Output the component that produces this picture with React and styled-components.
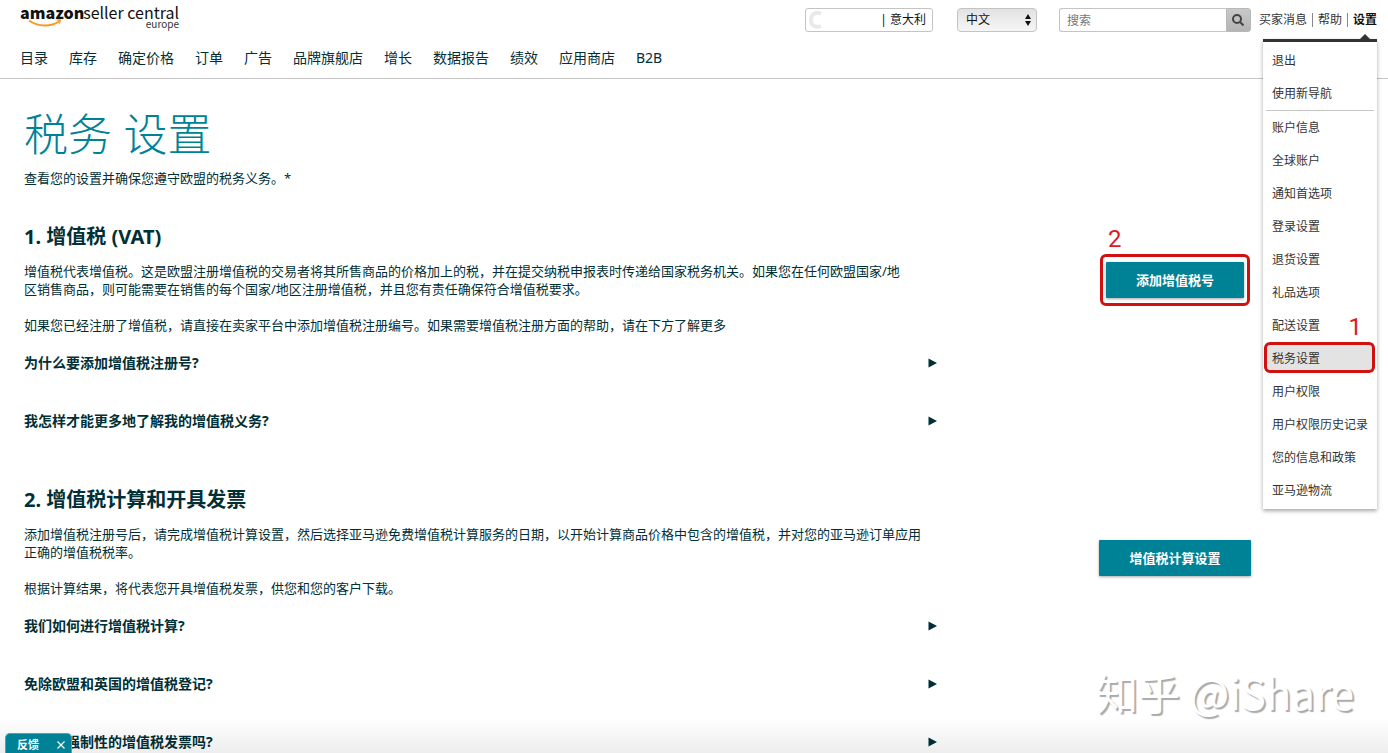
import React from 'react';
import styled, { createGlobalStyle, css } from 'styled-components';

const GlobalStyle = createGlobalStyle`
  * {
    box-sizing: border-box;
  }
  body {
    margin: 0;
    background: #fff;
    color: #002f36;
    font-family: 'Noto Sans', 'Noto Sans CJK SC', sans-serif;
    font-size: 13px;
    line-height: 18px;
  }
  a {
    color: inherit;
    text-decoration: none;
  }
  button,
  input,
  select {
    font-family: inherit;
    line-height: 18px;
  }
`;

const Page = styled.div`
  position: relative;
  height: 100vh;
  overflow: hidden;
`;

const Header = styled.header`
  border-bottom: 1px solid #c4c4c4;
`;

const TopRow = styled.div`
  display: flex;
  justify-content: space-between;
  align-items: flex-start;
  height: 40px;
  padding: 0 11px 0 20px;
`;

const Logo = styled.a`
  color: #111;
`;

const Tools = styled.div`
  display: flex;
  align-items: center;
  height: 24px;
  margin-top: 8px;
  font-size: 12px;
`;

const Marketplace = styled.button`
  display: flex;
  align-items: center;
  justify-content: space-between;
  width: 128px;
  height: 24px;
  margin-right: 24px;
  padding: 0 6px 0 2px;
  border: 1px solid #c4c4c4;
  border-radius: 3px;
  background: #fff;
  color: #111;
  font-size: 12px;
`;

const LanguageBox = styled.div`
  display: flex;
  position: relative;
  margin-right: 22px;
  svg {
    position: absolute;
    top: 6px;
    right: 5px;
    pointer-events: none;
  }
`;

const LanguageSelect = styled.select`
  width: 80px;
  height: 24px;
  padding: 0 8px;
  appearance: none;
  border: 1px solid #c4c4c4;
  border-radius: 4px;
  background: linear-gradient(#e2e2e2, #f6f6f6);
  color: #111;
  font-size: 12px;
`;

const Search = styled.form`
  display: flex;
  margin-right: 8px;
`;

const SearchInput = styled.input`
  width: 167px;
  height: 24px;
  padding: 0 7px;
  border: 1px solid #c4c4c4;
  border-right: 0;
  border-radius: 3px 0 0 3px;
  font-size: 12px;
  &::placeholder {
    color: #777;
  }
`;

const SearchButton = styled.button`
  display: flex;
  align-items: center;
  justify-content: center;
  width: 25px;
  height: 24px;
  padding: 0;
  border: 1px solid #b8b8b8;
  border-radius: 0 3px 3px 0;
  background: linear-gradient(#c9c9c9, #b4b4b4);
`;

const ToolLink = styled.a`
  color: ${({ $active }) => ($active ? '#111' : '#333')};
  font-weight: ${({ $active }) => ($active ? 'bold' : 'normal')};
`;

const Separator = styled.span`
  width: 1px;
  height: 14px;
  margin: 0 5px;
  background: #888;
`;

const SettingsAnchor = styled.div`
  position: relative;
`;

const Menu = styled.ul`
  position: absolute;
  z-index: 2;
  top: 28px;
  right: 0;
  width: 114px;
  margin: 0;
  padding: 2px 0;
  border-top: 3px solid #333;
  background: #fff;
  box-shadow: 0 2px 4px rgba(0, 0, 0, 0.35);
  list-style: none;
  &::before {
    content: '';
    position: absolute;
    top: -8px;
    right: 6px;
    border: 6px solid transparent;
    border-top: 0;
    border-bottom-color: #333;
  }
`;

const MenuItem = styled.li`
  position: relative;
  margin: 0 3px;
  ${({ $divided }) => $divided && css`
    border-bottom: 1px solid #c4c4c4;
  `}
`;

const MenuLink = styled.a`
  display: block;
  padding: 0 6px;
  background: ${({ $current }) => ($current ? 'linear-gradient(#e3e3e3, #e3e3e3) 0 1px / 100% 29px no-repeat' : 'none')};
  color: #333;
  line-height: 33px;
  white-space: nowrap;
`;

const Mark = styled.span`
  display: flex;
  position: absolute;
  inset: ${({ $inset }) => $inset};
  justify-content: ${({ $align }) => $align};
  border: 3px solid #d0110f;
  border-radius: 6px;
  pointer-events: none;
`;

const MarkNumber = styled.span`
  position: absolute;
  bottom: 100%;
  padding: 0 10px 4px 5px;
  color: #d8201f;
  font-family: Roboto, sans-serif;
  font-size: 24px;
  line-height: 28px;
`;

const Nav = styled.nav`
  display: flex;
  gap: 21px;
  height: 38px;
  padding: 0 20px;
  font-size: 14px;
  line-height: 36px;
`;

const Main = styled.main`
  padding: 25px 137px 0 24px;
`;

const Title = styled.h1`
  margin: 0 0 5px;
  color: #008296;
  font-size: 44px;
  font-weight: 300;
  line-height: 60px;
`;

const Section = styled.section`
  display: grid;
  grid-template-columns: minmax(0, 1fr) 152px;
  column-gap: 160px;
  margin-top: 35px;
`;

const SectionTitle = styled.h2`
  margin: 0 0 10px;
  font-size: 20px;
  line-height: 30px;
`;

const Text = styled.p`
  margin: 0;
  padding-right: 12px;
  & + & {
    margin-top: 18px;
  }
`;

const Question = styled.button`
  display: flex;
  align-items: center;
  justify-content: space-between;
  width: 100%;
  height: 58px;
  padding: 0 2px 0 0;
  border: 0;
  background: none;
  color: inherit;
  font-size: 14px;
  font-weight: bold;
`;

const Action = styled.div`
  position: relative;
  justify-self: center;
  align-self: start;
  margin-top: ${({ $top }) => $top};
`;

const ActionButton = styled.button`
  height: 36px;
  padding: 0 30px;
  border: 0;
  border-radius: 1px;
  background: #008296;
  box-shadow: 0 1px 3px rgba(0, 0, 0, 0.35);
  color: #fff;
  font-size: 13px;
  font-weight: bold;
  white-space: nowrap;
`;

const BottomFade = styled.div`
  position: absolute;
  right: 0;
  bottom: 0;
  left: 0;
  height: 36px;
  background: linear-gradient(rgba(0, 0, 0, 0), rgba(0, 0, 0, 0.07));
  pointer-events: none;
`;

const Feedback = styled.div`
  display: flex;
  position: absolute;
  bottom: 0;
  left: 5px;
  align-items: center;
  justify-content: space-between;
  width: 67px;
  height: 20px;
  padding: 2px 6px 0 11px;
  border: 1px solid #4ba5b2;
  border-bottom: 0;
  border-radius: 5px 5px 0 0;
  background: #008296;
`;

const FeedbackButton = styled.button`
  display: flex;
  padding: 0;
  border: 0;
  background: none;
  color: #fff;
  font-size: 11px;
  font-weight: bold;
`;

const Watermark = styled.div`
  position: absolute;
  right: 34px;
  bottom: 36px;
  color: #fff;
  font-family: 'Noto Sans CJK SC', sans-serif;
  font-size: 42px;
  line-height: 50px;
  text-shadow: 2px 2px 1px #aaa;
  pointer-events: none;
`;

const SellerLogo = () => (
  <svg width="162" height="36" viewBox="0 0 162 36" role="img" aria-label="amazon seller central europe">
    <g fontFamily="'Noto Sans CJK SC', sans-serif" fill="#111">
      <text x="0" y="19" fontSize="16" fontWeight="900">amazon</text>
      <text x="159" y="19" fontSize="16" textAnchor="end">seller central</text>
      <text x="159" y="28" fontSize="10" textAnchor="end" fill="#333">europe</text>
    </g>
    <path d="M9 20.5C18 27 31 27 39 21.5" fill="none" stroke="#f79b1e" strokeWidth="2" />
    <path d="M35 20C38 19 40 19 41 19.500C41 21.500 40 23.500 38.500 25C39 23 39.500 21.500 39 21C38 20.500 36.500 20.500 35 20Z" fill="#f79b1e" />
  </svg>
);

const Arrow = () => (
  <svg width="9" height="10" viewBox="0 0 9 10" aria-hidden="true">
    <path d="M0.500 0.500L9 5L0.500 9.500Z" fill="#002f36" />
  </svg>
);

const navItems = ['目录', '库存', '确定价格', '订单', '广告', '品牌旗舰店', '增长', '数据报告', '绩效', '应用商店', 'B2B'];

const menuItems = [
  { label: '退出' },
  { label: '使用新导航', divided: true },
  { label: '账户信息' },
  { label: '全球账户' },
  { label: '通知首选项' },
  { label: '登录设置' },
  { label: '退货设置' },
  { label: '礼品选项' },
  { label: '配送设置' },
  { label: '税务设置', current: true },
  { label: '用户权限' },
  { label: '用户权限历史记录' },
  { label: '您的信息和政策' },
  { label: '亚马逊物流' },
];

const SettingsMenu = () => (
  <Menu>
    {menuItems.map(({ label, divided, current }) => (
      <MenuItem key={label} $divided={divided}>
        <MenuLink href="#" $current={current}>{label}</MenuLink>
        {current && (
          <Mark $inset="0 -1px 2px -2px" $align="flex-end">
            <MarkNumber>1</MarkNumber>
          </Mark>
        )}
      </MenuItem>
    ))}
  </Menu>
);

const TopBar = () => (
  <TopRow>
    <Logo href="#"><SellerLogo /></Logo>
    <Tools>
      <Marketplace type="button">
        <svg width="16" height="20" viewBox="0 0 16 20" aria-hidden="true">
          <path d="M13 4C8 1 3 4 3 10C3 16 8 18 13 16" fill="none" stroke="#e9e9e9" strokeWidth="4" />
        </svg>
        <span>| 意大利</span>
      </Marketplace>
      <LanguageBox>
        <LanguageSelect aria-label="语言" defaultValue="zh">
          <option value="zh">中文</option>
        </LanguageSelect>
        <svg width="8" height="12" viewBox="0 0 8 12" aria-hidden="true">
          <path d="M4 0L7 5H1ZM4 12L1 7H7Z" fill="#111" />
        </svg>
      </LanguageBox>
      <Search>
        <SearchInput type="text" placeholder="搜索" aria-label="搜索" />
        <SearchButton type="button" aria-label="搜索">
          <svg width="12" height="12" viewBox="0 0 12 12" fill="none" stroke="#444" strokeWidth="2">
            <circle cx="5" cy="5" r="4" />
            <path d="M8 8L11.500 11.500" />
          </svg>
        </SearchButton>
      </Search>
      <ToolLink href="#">买家消息</ToolLink>
      <Separator />
      <ToolLink href="#">帮助</ToolLink>
      <Separator />
      <SettingsAnchor>
        <ToolLink href="#" $active>设置</ToolLink>
        <SettingsMenu />
      </SettingsAnchor>
    </Tools>
  </TopRow>
);

const Faq = ({ questions }) => questions.map((question) => (
  <Question key={question} type="button">
    <span>{question}</span>
    <Arrow />
  </Question>
));

const App = () => (
  <Page>
    <GlobalStyle />
    <Header>
      <TopBar />
      <Nav>
        {navItems.map((item) => <a key={item} href="#">{item}</a>)}
      </Nav>
    </Header>
    <Main>
      <Title>税务 设置</Title>
      <Text>查看您的设置并确保您遵守欧盟的税务义务。*</Text>
      <Section>
        <div>
          <SectionTitle>1. 增值税 (VAT)</SectionTitle>
          <Text>
            增值税代表增值税。这是欧盟注册增值税的交易者将其所售商品的价格加上的税，并在提交纳税申报表时传递给国家税务机关。如果您在任何欧盟国家/地
            <br />
            区销售商品，则可能需要在销售的每个国家/地区注册增值税，并且您有责任确保符合增值税要求。
          </Text>
          <Text>如果您已经注册了增值税，请直接在卖家平台中添加增值税注册编号。如果需要增值税注册方面的帮助，请在下方了解更多</Text>
          <Faq questions={['为什么要添加增值税注册号?', '我怎样才能更多地了解我的增值税义务?']} />
        </div>
        <Action $top="40px">
          <ActionButton type="button">添加增值税号</ActionButton>
          <Mark $inset="-8px -6px" $align="flex-start">
            <MarkNumber>2</MarkNumber>
          </Mark>
        </Action>
      </Section>
      <Section>
        <div>
          <SectionTitle>2. 增值税计算和开具发票</SectionTitle>
          <Text>添加增值税注册号后，请完成增值税计算设置，然后选择亚马逊免费增值税计算服务的日期，以开始计算商品价格中包含的增值税，并对您的亚马逊订单应用正确的增值税税率。</Text>
          <Text>根据计算结果，将代表您开具增值税发票，供您和您的客户下载。</Text>
          <Faq questions={['我们如何进行增值税计算?', '免除欧盟和英国的增值税登记?', '是否有强制性的增值税发票吗?']} />
        </div>
        <Action $top="55px">
          <ActionButton type="button">增值税计算设置</ActionButton>
        </Action>
      </Section>
    </Main>
    <BottomFade />
    <Watermark>知乎 @iShare</Watermark>
    <Feedback>
      <FeedbackButton type="button">反馈</FeedbackButton>
      <FeedbackButton type="button" aria-label="关闭">
        <svg width="8" height="8" viewBox="0 0 8 8" stroke="#fff" strokeWidth="1.200">
          <path d="M0.500 0.500L7.500 7.500M7.500 0.500L0.500 7.500" />
        </svg>
      </FeedbackButton>
    </Feedback>
  </Page>
);

export default App;
